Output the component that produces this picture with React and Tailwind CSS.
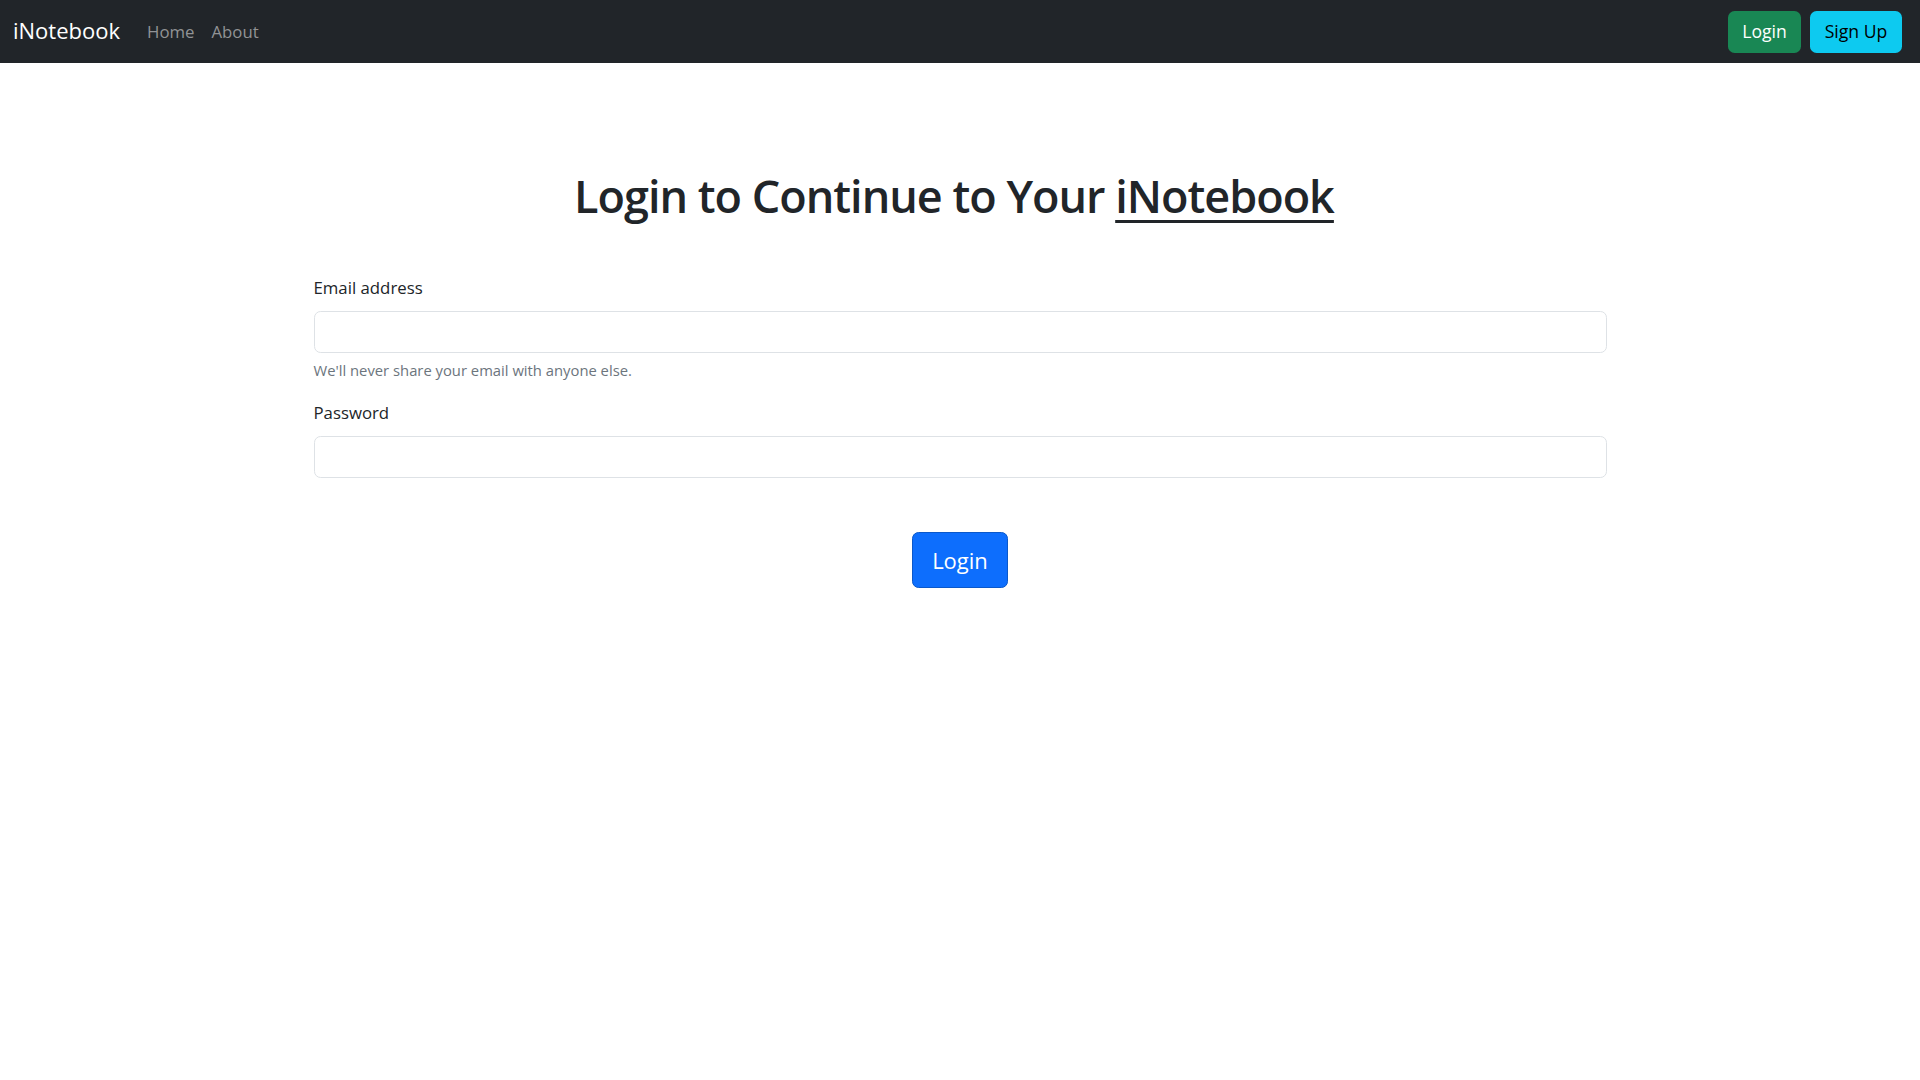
import React from "react";

export default function App() {
  return (
    <div className="min-h-screen bg-white text-[#212529] font-['Segoe_UI','Open_Sans','Noto_Sans',sans-serif]">
      <nav className="h-[63px] bg-[#212529] flex items-center justify-between pl-[13px] pr-[18px]">
        <div className="flex items-center">
          <span className="pb-[3px] text-[22px] text-white leading-none">iNotebook</span>
          <a className="ml-[27px] pt-[1px] text-[16.8px] text-[#919395] leading-none">Home</a>
          <a className="ml-[17px] pt-[1px] text-[16.8px] text-[#919395] leading-none">About</a>
        </div>
        <div className="flex items-center gap-[9px]">
          <button className="h-[42px] w-[73px] rounded-[6.6px] bg-[#198754] text-white text-[17.6px]">Login</button>
          <button className="h-[42px] w-[92px] rounded-[6.6px] bg-[#0dcaf0] text-black text-[17.6px]">Sign Up</button>
        </div>
      </nav>
      <main className="w-[1293px] mx-auto flex flex-col">
        <h1 className="mt-[103px] pr-[12px] text-center text-[45px] leading-[60px] font-semibold tracking-[-1px]">
          Login to Continue to Your <a className="underline decoration-[3px] underline-offset-[7px]">iNotebook</a>
        </h1>
        <label className="mt-[49px] text-[16.8px] leading-[26px]">Email address</label>
        <div className="mt-[10px] h-[42px] rounded-[6.6px] border border-[#dee2e6] bg-white"></div>
        <div className="mt-[6px] text-[14.8px] leading-[23px] text-[#6c757d]">We'll never share your email with anyone else.</div>
        <label className="mt-[18px] text-[16.8px] leading-[26px]">Password</label>
        <div className="mt-[10px] h-[42px] rounded-[6.6px] border border-[#dee2e6] bg-white"></div>
        <div className="mt-[54px] flex justify-center">
          <button className="h-[56px] w-[96px] rounded-[6.6px] bg-[#0d6efd] border border-[#0a58ca] text-white text-[22px]">Login</button>
        </div>
      </main>
    </div>
  );
}
